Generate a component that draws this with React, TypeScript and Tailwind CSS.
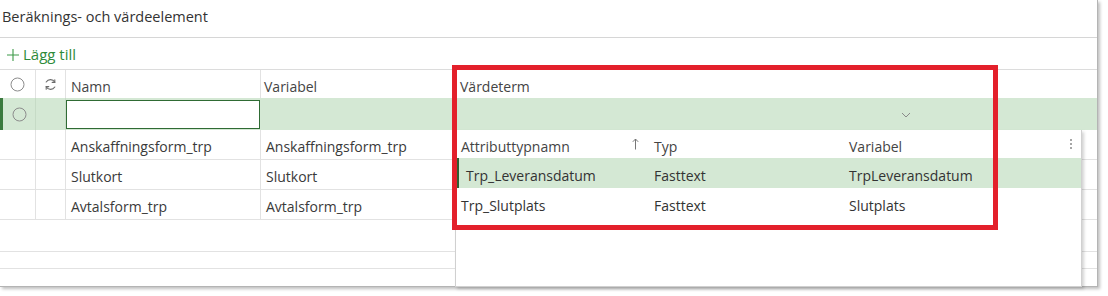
const font = "font-['Segoe_UI','Open_Sans','Noto_Sans',sans-serif]";

function Radio() {
  return (
    <svg width="15" height="15" viewBox="0 0 15 15" fill="none">
      <circle cx="7.5" cy="7.5" r="6.5" stroke="#8c8c8c" strokeWidth="1" />
    </svg>
  );
}

function RefreshIcon() {
  return (
    <svg width="13" height="13" viewBox="0 0 13 13" fill="none" stroke="#6b6b6b" strokeWidth="1.1" strokeLinecap="round">
      <path d="M10.8 4.2A5 5 0 0 0 2.2 4" />
      <path d="M10.8 1.8v2.6H8.2" />
      <path d="M2.2 8.8a5 5 0 0 0 8.6 0.2" />
      <path d="M2.2 11.2V8.6h2.6" />
    </svg>
  );
}

const rows = ["Anskaffningsform_trp", "Slutkort", "Avtalsform_trp"];

export default function App() {
  return (
    <div className={`${font} bg-white w-[1108px] h-[296px] text-[#333]`}>
      <div className="relative w-[1098px] h-[287px] bg-white border-r border-b border-[#b4b4b4] shadow-[2px_2px_3px_rgba(0,0,0,0.25)]">
        <div className="h-[38px] border-b border-[#d6d6d6] flex items-center pl-[2px] pb-[4px] text-[14.5px] text-[#333]">
          Beräknings- och värdeelement
        </div>
        <div className="h-[32px] border-b border-[#dcdcdc] flex items-center pl-[6px] gap-[3px] pt-[2px] text-[15px] text-[#2e8b3a]">
          <svg width="14" height="14" viewBox="0 0 14 14" stroke="#3d9a48" strokeWidth="1.1">
            <path d="M7 1v12M1 7h12" />
          </svg>
          <span>Lägg till</span>
        </div>

        {/* header row */}
        <div className="flex h-[28px] text-[14px] text-[#444]">
          <div className="w-[36px] flex items-center justify-center border-r border-[#e2e2e2]">
            <Radio />
          </div>
          <div className="w-[30px] flex items-center justify-center border-r border-[#e2e2e2]">
            <RefreshIcon />
          </div>
          <div className="w-[195px] flex items-center pl-[5px] pt-[4px] border-r border-[#e2e2e2]">Namn</div>
          <div className="w-[194px] flex items-center pl-[3px] pt-[4px]">Variabel</div>
          <div className="flex-1 flex items-center pl-[5px] pt-[4px]">Värdeterm</div>
        </div>

        {/* selected row */}
        <div className="flex h-[32px] bg-[#d4e8d4] border-l-[3px] border-[#3b7a3f]">
          <div className="w-[33px] flex items-center justify-center border-r border-[#c6dbc6]">
            <Radio />
          </div>
          <div className="w-[30px] border-r border-[#c6dbc6]" />
          <div className="w-[195px] flex items-center">
            <div className="w-[194px] h-[29px] bg-white border-[1.5px] border-[#2f6b34]" />
          </div>
          <div className="w-[194px]" />
          <div className="flex-1 flex items-center pl-[446px] pt-[2px]">
            <svg width="10" height="6" viewBox="0 0 10 6" fill="none" stroke="#8a8a8a" strokeWidth="1">
              <path d="M1 1l4 4 4-4" />
            </svg>
          </div>
        </div>

        {rows.map((r) => (
          <div key={r} className="flex h-[30px] border-b border-[#e2e2e2] text-[14px] text-[#3a3a3a]">
            <div className="w-[36px] border-r border-[#e2e2e2]" />
            <div className="w-[30px] border-r border-[#e2e2e2]" />
            <div className="w-[195px] flex items-center pl-[5px] pt-[4px] border-r border-[#e2e2e2]">{r}</div>
            <div className="w-[194px] flex items-center pl-[5px] pt-[4px]">{r}</div>
            <div className="flex-1" />
          </div>
        ))}

        <div className="h-[32px] border-b border-[#e2e2e2]" />
        <div className="h-[17px] border-b border-[#e2e2e2]" />

        {/* dropdown */}
        <div className="absolute left-[455px] top-[130px] w-[627px] h-[157px] bg-white border-l border-r border-b border-[#d0d0d0] shadow-[2px_2px_3px_rgba(0,0,0,0.18)] text-[14px] text-[#333]">
          <div className="flex h-[28px] items-center text-[#444]">
            <div className="w-[193px] flex items-center justify-between pl-[5px] pr-[10px] pt-[4px]">
              <span>Attributtypnamn</span>
              <svg width="7" height="12" viewBox="0 0 7 12" fill="none" stroke="#777" strokeWidth="1" className="-mt-[4px]">
                <path d="M3.5 11.5V1M0.8 3.8L3.5 1l2.7 2.8" />
              </svg>
            </div>
            <div className="w-[196px] pl-[5px] pt-[4px]">Typ</div>
            <div className="flex-1 pl-[4px] pt-[4px]">Variabel</div>
            <div className="w-[20px] flex flex-col items-center gap-[2px]">
              <span className="w-[2px] h-[2px] rounded-full bg-[#888]" />
              <span className="w-[2px] h-[2px] rounded-full bg-[#888]" />
              <span className="w-[2px] h-[2px] rounded-full bg-[#888]" />
            </div>
          </div>
          <div className="flex h-[30px] items-center pt-[4px] bg-[#d4e8d4] border-l-[2px] border-[#2f5f32] ml-[1px]">
            <div className="w-[190px] pl-[7px]">Trp_Leveransdatum</div>
            <div className="w-[196px] pl-[5px]">Fasttext</div>
            <div className="flex-1 pl-[4px]">TrpLeveransdatum</div>
          </div>
          <div className="flex h-[30px] items-center pt-[4px]">
            <div className="w-[193px] pl-[5px]">Trp_Slutplats</div>
            <div className="w-[196px] pl-[5px]">Fasttext</div>
            <div className="flex-1 pl-[4px]">Slutplats</div>
          </div>
        </div>

        {/* annotation */}
        <div className="absolute left-[452px] top-[65px] w-[546px] h-[165px] border-[5px] border-[#e3202b]" />
      </div>
    </div>
  );
}
